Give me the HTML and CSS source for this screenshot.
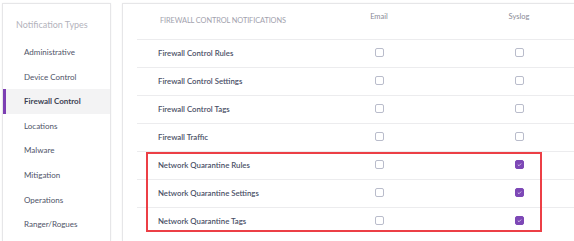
FILE: index.html
```html
<!DOCTYPE html>
<html>
<head>
  <title>Notification Settings</title>
  <link rel="stylesheet" href="styles.css">
</head>
<body>

  <div class="page">
    <!-- Sidebar -->
    <div class="card sidebar">
      <div class="side-title">Notification Types</div>
      <div class="side-item">Administrative</div>
      <div class="side-item">Device Control</div>
      <div class="side-item active">Firewall Control</div>
      <div class="side-item">Locations</div>
      <div class="side-item">Malware</div>
      <div class="side-item">Mitigation</div>
      <div class="side-item">Operations</div>
      <div class="side-item">Ranger/Rogues</div>
    </div>

    <!-- Notifications table -->
    <div class="card main">
      <div class="table">
        <div class="row head">
          <div class="label">FIREWALL CONTROL NOTIFICATIONS</div>
          <div class="col">Email</div>
          <div class="col">Syslog</div>
        </div>
        <div class="row">
          <div class="label">Firewall Control Rules</div>
          <div class="col"><span class="box"></span></div>
          <div class="col"><span class="box"></span></div>
        </div>
        <div class="row">
          <div class="label">Firewall Control Settings</div>
          <div class="col"><span class="box"></span></div>
          <div class="col"><span class="box"></span></div>
        </div>
        <div class="row">
          <div class="label">Firewall Control Tags</div>
          <div class="col"><span class="box"></span></div>
          <div class="col"><span class="box"></span></div>
        </div>
        <div class="row">
          <div class="label">Firewall Traffic</div>
          <div class="col"><span class="box"></span></div>
          <div class="col"><span class="box"></span></div>
        </div>
        <div class="row">
          <div class="label">Network Quarantine Rules</div>
          <div class="col"><span class="box"></span></div>
          <div class="col"><span class="box checked"><svg viewBox="0 0 10 10"><path d="M2.6 5.2 L4.3 6.8 L7.4 3.6" /></svg></span></div>
        </div>
        <div class="row">
          <div class="label">Network Quarantine Settings</div>
          <div class="col"><span class="box"></span></div>
          <div class="col"><span class="box checked"><svg viewBox="0 0 10 10"><path d="M2.6 5.2 L4.3 6.8 L7.4 3.6" /></svg></span></div>
        </div>
        <div class="row">
          <div class="label">Network Quarantine Tags</div>
          <div class="col"><span class="box"></span></div>
          <div class="col"><span class="box checked"><svg viewBox="0 0 10 10"><path d="M2.6 5.2 L4.3 6.8 L7.4 3.6" /></svg></span></div>
        </div>
      </div>
      <!-- highlight annotation -->
      <div class="highlight"></div>
    </div>
  </div>

</body>
</html>
```

FILE: styles.css
```css
body {
  margin: 0;
  background: #ffffff;
  font-family: Lato, "Open Sans", sans-serif;
  overflow: hidden;
}

.page {
  display: flex;
  gap: 11px;
  padding: 3px 0 0 2px;
  height: 241px;
  box-sizing: border-box;
}

.card {
  background: #fff;
  border: 1px solid #e6e6e8;
  border-bottom: none;
  box-shadow: 0 0 2px rgba(0, 0, 0, 0.05);
}

/* Sidebar */
.sidebar {
  width: 107px;
  flex-shrink: 0;
}

.side-title {
  height: 36px;
  line-height: 41px;
  padding-left: 13px;
  font-size: 9px;
  color: #b3b3bc;
}

.side-item {
  height: 24.6px;
  line-height: 24.6px;
  padding-left: 18px;
  font-size: 8px;
  color: #4f5468;
  border-left: 3px solid transparent;
}

.side-item.active {
  background: #f3f3f4;
  border-left-color: #7c3fb3;
  font-weight: 700;
  color: #3b3f52;
}

/* Main table */
.main {
  position: relative;
  width: 470px;
  flex-shrink: 0;
}

.table {
  margin-left: 14px;
}

.row {
  display: grid;
  grid-template-columns: 172px 140px 140px;
  height: 28px;
  align-items: center;
  border-top: 1px solid #ececee;
  box-sizing: border-box;
  padding-bottom: 2px;
}

.row.head {
  height: 35px;
  border-top: none;
  align-items: start;
  padding-bottom: 0;
}

.head .label {
  padding-top: 12px;
  padding-left: 23px;
  font-size: 7.4px;
  font-weight: 400;
  color: #a2a2ad;
  letter-spacing: -0.1px;
}

.head .col {
  display: block;
  padding-top: 8px;
  font-size: 7.5px;
  color: #8a8a96;
}

.label {
  padding-left: 21px;
  font-size: 7.8px;
  font-weight: 600;
  color: #4a4f66;
  white-space: nowrap;
}

.col {
  display: flex;
  justify-content: center;
  align-items: center;
  text-align: center;
}

.box {
  width: 9px;
  height: 9px;
  border: 1px solid #b9bccb;
  border-radius: 2px;
  box-sizing: border-box;
}

.box.checked {
  background: #7d48b6;
  border-color: #7d48b6;
}

.box svg {
  display: block;
  width: 7px;
  height: 7px;
}

.box svg path {
  fill: none;
  stroke: #e9def5;
  stroke-width: 1.1;
}

.highlight {
  position: absolute;
  left: 23px;
  top: 148px;
  width: 396px;
  height: 80px;
  border: 2px solid #ec3f46;
  box-sizing: border-box;
}
```
